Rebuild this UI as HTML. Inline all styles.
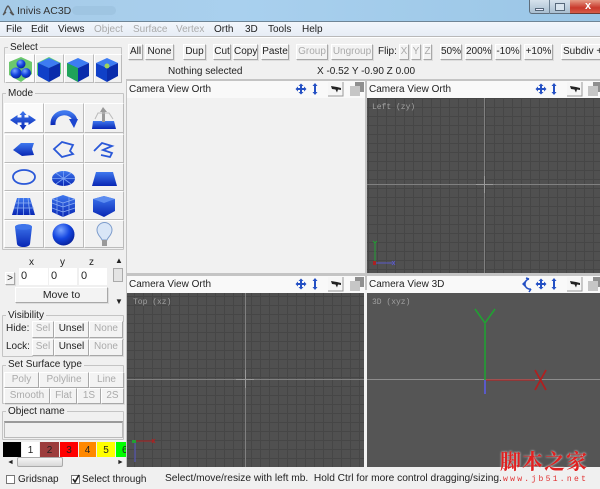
<!DOCTYPE html>
<html><head><meta charset="utf-8"><style>
html,body{margin:0;padding:0;width:600px;height:489px;overflow:hidden;background:#f0f0f0}
#r{position:relative;width:600px;height:489px;overflow:hidden;font:10px/14px "Liberation Sans","Noto Sans CJK SC",sans-serif;color:#222;filter:blur(.35px);background:#f0f0f0}
#r div,#r svg{position:absolute;box-sizing:border-box}
.t{white-space:nowrap}
.b{background:#f3f3f3;border:1px solid;border-color:#fff #a8a8a8 #a8a8a8 #fff;text-align:center;white-space:nowrap;overflow:hidden;line-height:14px;box-shadow:1px 1px 0 #ddd}
.d{color:#aaa}
.h{background:#f9f9f9;height:17px}
.f{border:1px solid #c4c4c4;border-radius:1px}
.l{background:#f0f0f0;padding:0 2px;white-space:nowrap;line-height:13px}
.i{background:#f1f1f1;border-right:1px solid #bbb;border-bottom:1px solid #bbb;border-top:1px solid #fff;border-left:1px solid #fff}
.n{font:8px/10px "Liberation Mono",monospace;color:#a0a0a0;white-space:nowrap}
.in{background:#fff;padding-left:2px;line-height:16px;font-size:11px}
</style></head><body><div id="r">
<div style="left:0;top:0;width:600px;height:22px;background:linear-gradient(90deg,#a6cbe8,#a9d0ee 40%,#9ac6e6)"></div>
<div style="left:0;top:21px;width:600px;height:1px;background:#6f8596"></div>
<div class="t" style="left:17px;top:4px;font-size:10.500px;color:#333">Inivis AC3D</div>
<div style="left:72px;top:6px;width:44px;height:9px;background:#9fc5e2;border-radius:5px"></div>
<svg style="left:1px;top:4px" width="15" height="13" viewBox="0 0 15 13"><path d="M2 11C4 9 5 3 7 2c2 1 3 7 6 9M5 8l-3 3M9 8l3 3" fill="none" stroke="#555" stroke-width="1.300"/></svg>
<div style="left:529px;top:0;width:71px;height:14px;background:linear-gradient(#d6e2ec,#a9bfd1);border:1px solid #5e6e7c;border-top:0;border-radius:0 0 0 3px"></div>
<div style="left:549px;top:0;width:1px;height:14px;background:#6d8192"></div>
<div style="left:570px;top:0;width:30px;height:14px;background:linear-gradient(#e59a85,#c9392c 60%,#d55c48);border-bottom:1px solid #6e3a33"></div>
<div style="left:535px;top:8px;width:9px;height:3px;background:#eef;border:1px solid #56687a"></div>
<div style="left:555px;top:3px;width:10px;height:8px;border:1px solid #56687a;background:#d8e4ee"></div>
<div class="t" style="left:585px;top:0;font:bold 11px/13px 'Liberation Sans',sans-serif;color:#fff">x</div>
<div style="left:0;top:22px;width:600px;height:15px;background:linear-gradient(#f2f6fb,#e6ecf5)"></div>
<div style="left:0;top:36px;width:600px;height:1px;background:#b9b9b9"></div>
<div style="left:0;top:37px;width:600px;height:1px;background:#fff"></div>
<div class="t" style="left:6px;top:23px">File</div><div class="t" style="left:31px;top:23px">Edit</div><div class="t" style="left:58px;top:23px">Views</div>
<div class="t d" style="left:94px;top:23px">Object</div><div class="t d" style="left:133px;top:23px">Surface</div><div class="t d" style="left:176px;top:23px">Vertex</div>
<div class="t" style="left:214px;top:23px">Orth</div><div class="t" style="left:245px;top:23px">3D</div><div class="t" style="left:268px;top:23px">Tools</div><div class="t" style="left:302px;top:23px">Help</div>

<div class="b" style="left:128px;top:44px;width:15px;height:16px">All</div>
<div class="b" style="left:145px;top:44px;width:29px;height:16px">None</div>
<div class="b" style="left:183px;top:44px;width:23px;height:16px">Dup</div>
<div class="b" style="left:213px;top:44px;width:18px;height:16px">Cut</div>
<div class="b" style="left:233px;top:44px;width:25px;height:16px">Copy</div>
<div class="b" style="left:261px;top:44px;width:28px;height:16px">Paste</div>
<div class="b d" style="left:296px;top:44px;width:32px;height:16px">Group</div>
<div class="b d" style="left:331px;top:44px;width:42px;height:16px">Ungroup</div>
<div class="t" style="left:378px;top:45px">Flip:</div>
<div class="b d" style="left:399px;top:44px;width:10px;height:16px">X</div>
<div class="b d" style="left:411px;top:44px;width:10px;height:16px">Y</div>
<div class="b d" style="left:423px;top:44px;width:9px;height:16px">Z</div>
<div class="b" style="left:440px;top:44px;width:22px;height:16px">50%</div>
<div class="b" style="left:465px;top:44px;width:27px;height:16px">200%</div>
<div class="b" style="left:495px;top:44px;width:26px;height:16px">-10%</div>
<div class="b" style="left:524px;top:44px;width:29px;height:16px">+10%</div>
<div class="b" style="left:561px;top:44px;width:45px;height:16px;text-align:left;padding-left:1px">Subdiv +</div>
<div class="t" style="left:168px;top:65px">Nothing selected</div>
<div class="t" style="left:317px;top:65px">X -0.52 Y -0.90 Z 0.00</div>

<!-- Viewports -->
<div style="left:126px;top:79px;width:474px;height:389px;background:#c4c4c4"></div>
<div style="left:364px;top:290px;width:3px;height:178px;background:#f2f2f2"></div>
<div style="left:127px;top:81px;width:238px;height:192px;background:#f1f1f1"></div>
<div style="left:367px;top:98px;width:233px;height:175px;background:#505050"></div>
<div style="left:127px;top:293px;width:237px;height:174px;background:#505050"></div>
<div style="left:367px;top:293px;width:233px;height:174px;background:#555"></div>
<div class="h" style="left:127px;top:81px;width:238px"></div>
<div class="h" style="left:367px;top:81px;width:233px"></div>
<div class="h" style="left:127px;top:276px;width:238px"></div>
<div class="h" style="left:367px;top:276px;width:233px"></div>
<div class="t" style="left:129px;top:83px">Camera View Orth</div>
<div class="t" style="left:369px;top:83px">Camera View Orth</div>
<div class="t" style="left:129px;top:278px">Camera View Orth</div>
<div class="t" style="left:369px;top:278px">Camera View 3D</div>

<svg style="left:0;top:0" width="600" height="489">
<defs>
<pattern id="g" width="9" height="9" patternUnits="userSpaceOnUse"><path d="M8.500 0V9M0 8.500H9" stroke="#464646" stroke-width="1" fill="none"/></pattern>
<linearGradient id="bl" x1="0" y1="0" x2="0" y2="1"><stop offset="0" stop-color="#3f78ee"/><stop offset="1" stop-color="#0826b4"/></linearGradient>
<radialGradient id="sp" cx=".38" cy=".3" r=".8"><stop offset="0" stop-color="#7aa4ff"/><stop offset=".5" stop-color="#1446e0"/><stop offset="1" stop-color="#05188c"/></radialGradient>
<g id="ar"><path d="M0-5.500l2.500 2.500H1V-1h2v-1.500L5.500 0 3 2.500V1H1v2h1.500L0 5.500-2.500 3H-1V1h-2v1.500L-5.500 0-3-2.500V-1h2v-2h-1.500z" fill="#2450c4"/></g>
<g id="ud"><path d="M0-6l2.500 3H1v-.5V3h1.500L0 6-2.500 3H-1V-3h-1.500z" fill="#2450c4"/></g>
<g id="cam"><rect x="-8" y="-7" width="15" height="14" fill="#f6f6f6"/><path d="M7-7V7H-8" fill="none" stroke="#999"/><path d="M-5-3l6 1 4 1v2l-3-.5-1 3-1.500-3L-4 0z" fill="#222"/></g>
<g id="sq"><rect x="-2" y="-7" width="9" height="10" fill="#8f8f8f"/><rect x="-7" y="-3" width="10" height="10" fill="#c6c6c6"/></g>
<g id="cb"><path d="M-11-6l11-5 11 5-11 5z" fill="#3d7cf2"/><path d="M-11-6l11 5v14l-11-6z" fill="#1040c8"/><path d="M11-6l-11 5v14l11-6z" fill="#0a2cab"/></g>
</defs>
<rect x="367" y="98" width="233" height="175" fill="url(#g)"/>
<rect x="127" y="293" width="237" height="174" fill="url(#g)"/>
<g stroke="#808080"><path d="M484.500 98V273M367 184.500H600M245.500 293V467M127 379.500H364"/></g>
<path d="M476 184.500H493M484.500 176V193M236 379.500H254M245.500 370V388" stroke="#9a9a9a"/>
<path d="M367 379.500H600" stroke="#8d8d8d"/>
<path d="M375 242V263" stroke="#21a033"/><path d="M375 263H392" stroke="#5a5ac8"/><path d="M373 241l2 2 2-2" stroke="#21a033" fill="none"/><path d="M373 261h3v4h-3z" fill="#a22"/><path d="M392 261l3 4M395 261l-3 4" stroke="#5a5ac8"/>
<path d="M135 441V462" stroke="#5a5ac8"/><path d="M135 441H154" stroke="#b02020"/><path d="M132 440h4v3h-4z" fill="#21a033"/><path d="M152 439l3 4M155 439l-3 4" stroke="#b02020"/>
<path d="M485 380V324M475 309L485 323 495 309" fill="none" stroke="#21a033" stroke-width="1.600"/>
<path d="M485 380V394" stroke="#5a5ac8" stroke-width="2"/>
<path d="M486 380H535" stroke="#b02828" stroke-width="1.300"/>
<path d="M535 370L546 390M546 370L535 390" stroke="#b02020" stroke-width="1.800"/>
<use href="#ar" x="301" y="89"/><use href="#ud" x="315" y="89"/><use href="#cam" x="336" y="89"/><use href="#sq" x="357" y="89"/>
<use href="#ar" x="541" y="89"/><use href="#ud" x="554" y="89"/><use href="#cam" x="575" y="89"/><use href="#sq" x="595" y="89"/>
<use href="#ar" x="301" y="284"/><use href="#ud" x="315" y="284"/><use href="#cam" x="336" y="284"/><use href="#sq" x="357" y="284"/>
<use href="#ar" x="541" y="284"/><use href="#ud" x="554" y="284"/><use href="#cam" x="575" y="284"/><use href="#sq" x="595" y="284"/>
<path d="M529 279a5 5 0 1 0 2 10M529 279l-3-1M531 289l-2 3" fill="none" stroke="#2450c4" stroke-width="1.500"/><path d="M522 284l3-3v6z" fill="#2450c4"/>
</svg>
<div class="n" style="left:372px;top:103px">Left (zy)</div>
<div class="n" style="left:133px;top:298px">Top (xz)</div>
<div class="n" style="left:372px;top:298px">3D (xyz)</div>

<!-- Left panel -->
<div style="left:0;top:40px;width:126px;height:428px;background:#f0f0f0"></div>
<div class="f" style="left:4px;top:47px;width:118px;height:36px"></div>
<div class="l" style="left:8px;top:41px">Select</div>
<div class="i" style="left:5px;top:54px;width:30px;height:29px;background:#fafafa"></div>
<div class="i" style="left:35px;top:54px;width:29px;height:29px"></div>
<div class="i" style="left:64px;top:54px;width:30px;height:29px"></div>
<div class="i" style="left:94px;top:54px;width:28px;height:29px"></div>
<div class="f" style="left:2px;top:93px;width:122px;height:157px"></div>
<div class="l" style="left:6px;top:87px">Mode</div>
<div class="i" style="left:4px;top:103px;width:40px;height:30px;background:#fafafa"></div>
<div class="i" style="left:44px;top:103px;width:40px;height:30px"></div>
<div class="i" style="left:84px;top:103px;width:40px;height:30px"></div>
<div class="i" style="left:4px;top:134px;width:40px;height:29px"></div><div class="i" style="left:44px;top:134px;width:40px;height:29px"></div><div class="i" style="left:84px;top:134px;width:40px;height:29px"></div>
<div class="i" style="left:4px;top:163px;width:40px;height:28px"></div><div class="i" style="left:44px;top:163px;width:40px;height:28px"></div><div class="i" style="left:84px;top:163px;width:40px;height:28px"></div>
<div class="i" style="left:4px;top:191px;width:40px;height:29px"></div><div class="i" style="left:44px;top:191px;width:40px;height:29px"></div><div class="i" style="left:84px;top:191px;width:40px;height:29px"></div>
<div class="i" style="left:4px;top:220px;width:40px;height:28px"></div><div class="i" style="left:44px;top:220px;width:40px;height:28px"></div><div class="i" style="left:84px;top:220px;width:40px;height:28px"></div>

<svg style="left:0;top:0" width="126" height="260">
<path d="M9 62l12-5 11 5v12l-11 8-12-7z" fill="#6cc86c"/>
<circle cx="21" cy="64" r="4.500" fill="url(#sp)"/><circle cx="16" cy="73" r="5.500" fill="url(#sp)"/><circle cx="26" cy="73" r="5" fill="url(#sp)"/>
<path d="M37 63l12-6 12 6v11l-12 8-12-7z" fill="#5dd07a"/>
<use href="#cb" x="49" y="69"/>
<use href="#cb" x="78" y="69"/><path d="M67 63l11 5v14l-11-6z" fill="#1fa35a"/>
<use href="#cb" x="107" y="69"/><circle cx="107" cy="66" r="2.500" fill="#9fd45a"/>
<path d="M23 111l3.500 4h-2v2.500h4V115l7.500 5-7.500 5v-2.500h-4V125h2L23 130l-3.500-5h2v-2.500h-4V125L10 120l7.500-5v2.500h4V115h-2z" fill="url(#bl)"/>
<path d="M53 125c-1-15 20-16 22-4" fill="none" stroke="url(#bl)" stroke-width="5"/><path d="M69 119h9l-4 9z" fill="#1c46d0"/>
<path d="M93 121h21l2 8H92z" fill="url(#bl)"/><path d="M103 107l4 5h-2v10h-3V112h-2z" fill="#999"/><path d="M95 119l3-6h11l4 6" fill="none" stroke="#bbb"/>
<path d="M13 150l8-7h13l-2 6 2 6-12 1z" fill="url(#bl)"/>
<path d="M54 149l8-7 11 3-3 6 3 3-11 3z" fill="none" stroke="#2a58d8" stroke-width="1.800"/>
<path d="M94 151l8-8 10 3-9 4 9 3-2 4-9-2" fill="none" stroke="#2a58d8" stroke-width="1.800"/>
<ellipse cx="24" cy="177" rx="11" ry="7" fill="none" stroke="#2a58d8" stroke-width="1.800"/>
<ellipse cx="63.500" cy="178.500" rx="11.500" ry="7.500" fill="url(#bl)"/><path d="M52 178.500H75M56 173L71 184M71 173L56 184M63.500 171V186" stroke="#7ea4f4" stroke-width=".8"/>
<path d="M96 172h17l4 14H92z" fill="url(#bl)"/>
<path d="M17 198h13l5 17H12z" fill="url(#bl)"/><path d="M15 203h17M14 208h20M19 198l-2 17M23.500 198v17M28 198l2 17" stroke="#8fb0f4" stroke-width=".8"/>
<path d="M52 199l11-4 12 4v13l-12 5-11-5z" fill="url(#bl)"/><path d="M52 199l11 4 12-4M63 203v14M52 203l11 4 12-4M52 208l11 4 12-4M57 197v18M69 197v18" stroke="#8fb0f4" stroke-width=".7" fill="none"/>
<path d="M93 199l11-3 11 3v12l-11 6-11-5z" fill="url(#bl)"/><path d="M93 199l11 4 11-4-11-3z" fill="#5c8cf0"/>
<path d="M15 227c0-4 17-4 17 0l-2 17c-1 4-12 4-13 0z" fill="url(#bl)"/><ellipse cx="23.500" cy="227" rx="8.500" ry="2.800" fill="#3e74ea"/>
<circle cx="63.500" cy="234.500" r="11" fill="url(#sp)"/>
<path d="M102 240c-1-3-5-5-5-10a7.500 7.500 0 0 1 15 0c0 5-4 7-5 10z" fill="#d9e6f7" stroke="#7d9ccb"/><path d="M102 240h5v6h-5z" fill="#999"/>
</svg>

<div class="t" style="left:29px;top:256px">x</div>
<div class="t" style="left:60px;top:256px">y</div>
<div class="t" style="left:89px;top:256px">z</div>
<div class="b" style="left:5px;top:272px;width:10px;height:13px;line-height:11px">&gt;</div>
<div class="in" style="left:19px;top:268px;width:29px;height:17px">0</div>
<div class="in" style="left:49px;top:268px;width:28px;height:17px">0</div>
<div class="in" style="left:79px;top:268px;width:28px;height:17px">0</div>
<div class="b" style="left:15px;top:287px;width:93px;height:16px;font-size:10.500px">Move to</div>
<div style="left:112px;top:255px;width:13px;height:52px;background:#f0f0f0"></div>
<div class="t" style="left:115px;top:254px;font-size:8px">▲</div>
<div style="left:113px;top:268px;width:10px;height:14px;background:#e4e4e4;border:1px solid #aaa"></div>
<div class="t" style="left:115px;top:295px;font-size:8px">▼</div>

<div class="f" style="left:2px;top:315px;width:122px;height:42px"></div>
<div class="l" style="left:6px;top:309px">Visibility</div>
<div class="t" style="left:6px;top:322px">Hide:</div>
<div class="b d" style="left:32px;top:321px;width:22px;height:17px">Sel</div>
<div class="b" style="left:54px;top:321px;width:35px;height:17px">Unsel</div>
<div class="b d" style="left:89px;top:321px;width:34px;height:17px">None</div>
<div class="t" style="left:6px;top:340px">Lock:</div>
<div class="b d" style="left:32px;top:339px;width:22px;height:17px">Sel</div>
<div class="b" style="left:54px;top:339px;width:35px;height:17px">Unsel</div>
<div class="b d" style="left:89px;top:339px;width:34px;height:17px">None</div>
<div class="f" style="left:2px;top:365px;width:122px;height:39px"></div>
<div class="l" style="left:6px;top:358px">Set Surface type</div>
<div class="b d" style="left:4px;top:372px;width:35px;height:16px">Poly</div>
<div class="b d" style="left:39px;top:372px;width:50px;height:16px">Polyline</div>
<div class="b d" style="left:89px;top:372px;width:35px;height:16px">Line</div>
<div class="b d" style="left:4px;top:388px;width:46px;height:16px">Smooth</div>
<div class="b d" style="left:50px;top:388px;width:27px;height:16px">Flat</div>
<div class="b d" style="left:77px;top:388px;width:24px;height:16px">1S</div>
<div class="b d" style="left:101px;top:388px;width:23px;height:16px">2S</div>
<div class="f" style="left:2px;top:411px;width:122px;height:29px"></div>
<div class="l" style="left:6px;top:405px">Object name</div>
<div style="left:4px;top:421px;width:119px;height:17px;background:#f0f0f0;border:1px solid #bbb;border-top:2px solid #9a9a9a"></div>
<div style="left:3px;top:442px;width:18px;height:15px;background:#000"></div>
<div class="t" style="left:22px;top:442px;width:17px;height:15px;background:#fff;text-align:center;line-height:18px">1</div>
<div class="t" style="left:40px;top:442px;width:19px;height:15px;background:#9c3c3c;text-align:center;line-height:18px">2</div>
<div class="t" style="left:60px;top:442px;width:18px;height:15px;background:#f00;text-align:center;line-height:18px">3</div>
<div class="t" style="left:79px;top:442px;width:17px;height:15px;background:#f80;text-align:center;line-height:18px">4</div>
<div class="t" style="left:97px;top:442px;width:18px;height:15px;background:#ff0;text-align:center;line-height:18px">5</div>
<div class="t" style="left:116px;top:442px;width:10px;height:15px;background:#0f0;line-height:18px;overflow:hidden;padding-left:6px">6</div>
<div style="left:3px;top:457px;width:123px;height:11px;background:#f0f0f0"></div>
<div style="left:17px;top:457px;width:46px;height:10px;background:linear-gradient(#f5f5f5,#d8d8d8);border:1px solid #aaa;border-radius:2px"></div>
<div class="t" style="left:7px;top:456px;font-size:7px">◄</div>
<div class="t" style="left:117px;top:456px;font-size:7px">►</div>

<div style="left:0;top:467px;width:600px;height:22px;background:#f0f0f0"></div>
<div style="left:6px;top:475px;width:9px;height:9px;background:#fff;border:1px solid #777"></div>
<div class="t" style="left:18px;top:473px">Gridsnap</div>
<div style="left:71px;top:475px;width:9px;height:9px;background:#fff;border:1px solid #777"></div>
<svg style="left:71px;top:474px" width="10" height="10"><path d="M2 5l2 3 4-7" fill="none" stroke="#222" stroke-width="1.600"/></svg>
<div class="t" style="left:82px;top:473px">Select through</div>
<div class="t" style="left:165px;top:472px;font-size:10.200px">Select/move/resize with left mb.&nbsp; Hold Ctrl for more control dragging/sizing.</div>
<div class="t" style="left:500px;top:449px;font:bold 21px/24px 'Noto Serif CJK SC','Noto Sans CJK SC',serif;color:#e02020;letter-spacing:1px;text-shadow:0 0 2px #fff">脚本之家</div>
<div class="t" style="left:503px;top:475px;font:8px/10px 'Liberation Mono',monospace;color:#e03030;letter-spacing:2.300px">www.jb51.net</div>
</div></body></html>
